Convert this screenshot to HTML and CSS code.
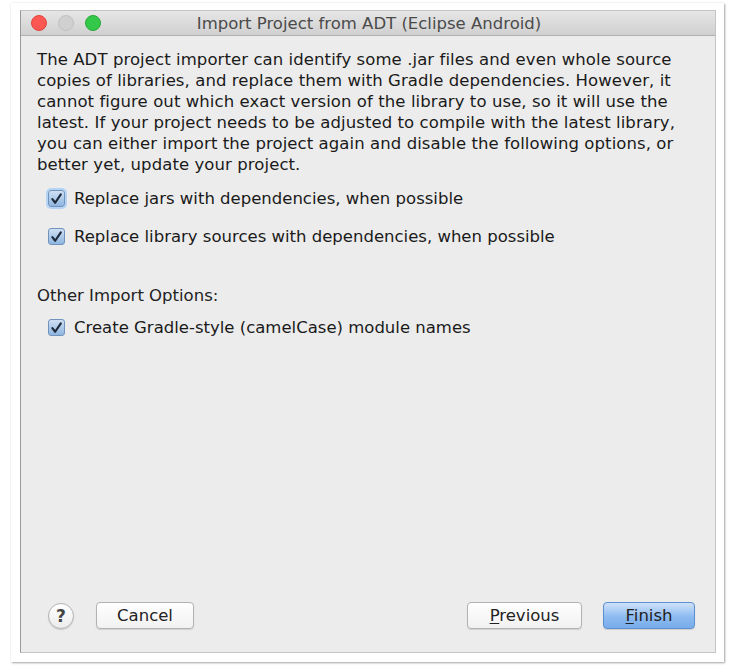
FILE: index.html
```html
<!DOCTYPE html>
<html>
<head>
<meta charset="utf-8">
<link rel="stylesheet" href="styles.css">
</head>
<body>
<div class="frame">
  <div class="window">
    <div class="titlebar">
      <div class="lights">
        <span class="light red"></span>
        <span class="light gray"></span>
        <span class="light green"></span>
      </div>
      <div class="title">Import Project from ADT (Eclipse Android)</div>
    </div>
    <div class="content">
      <p class="intro">The ADT project importer can identify some .jar files and even whole source<br>copies of libraries, and replace them with Gradle dependencies. However, it<br>cannot figure out which exact version of the library to use, so it will use the<br>latest. If your project needs to be adjusted to compile with the latest library,<br>you can either import the project again and disable the following options, or<br>better yet, update your project.</p>
      <div class="options">
        <label class="check focus"><span class="box"><svg viewBox="0 0 16 16" width="16" height="16"><path d="M3.6 8.2 L6.6 12 L12.6 3" fill="none" stroke="#1f2a3a" stroke-width="2.3" stroke-linecap="round" stroke-linejoin="round"/></svg></span>Replace jars with dependencies, when possible</label>
        <label class="check"><span class="box"><svg viewBox="0 0 16 16" width="16" height="16"><path d="M3.6 8.2 L6.6 12 L12.6 3" fill="none" stroke="#1f2a3a" stroke-width="2.3" stroke-linecap="round" stroke-linejoin="round"/></svg></span>Replace library sources with dependencies, when possible</label>
      </div>
      <div class="section">Other Import Options:</div>
      <label class="check"><span class="box"><svg viewBox="0 0 16 16" width="16" height="16"><path d="M3.6 8.2 L6.6 12 L12.6 3" fill="none" stroke="#1f2a3a" stroke-width="2.3" stroke-linecap="round" stroke-linejoin="round"/></svg></span>Create Gradle-style (camelCase) module names</label>
    </div>
    <div class="footer">
      <div class="left">
        <span class="help">?</span>
        <button class="btn cancel">Cancel</button>
      </div>
      <div class="right">
        <button class="btn prev"><u>P</u>revious</button>
        <button class="btn finish"><u>F</u>inish</button>
      </div>
    </div>
  </div>
</div>
</body>
</html>
```
FILE: styles.css
```css
* { box-sizing: border-box; }
html, body { margin: 0; padding: 0; background: #fff; }
body {
  width: 746px;
  height: 670px;
  font-family: "DejaVu Sans", "Noto Sans", sans-serif;
  color: #222;
}
.frame {
  margin: 3px 0 0 11px;
  width: 713px;
  height: 659px;
  background: #fff;
  padding: 7px 8px 9px 9px;
  box-shadow: 1px 1px 2px rgba(0,0,0,0.35), 0 0 1px rgba(0,0,0,0.15);
}
.window {
  width: 696px;
  height: 643px;
  background: #ececec;
  border: 1px solid #c4c4c4;
  border-left-color: #9a9a9a;
  display: flex;
  flex-direction: column;
}
.titlebar {
  height: 25px;
  background: linear-gradient(#e6e6e6, #d0d0d0);
  border-bottom: 1px solid #b0b0b0;
  position: relative;
  display: flex;
  align-items: center;
  justify-content: center;
}
.lights {
  position: absolute;
  left: 10px;
  top: 4px;
  display: flex;
  gap: 11px;
}
.light {
  width: 16px;
  height: 16px;
  border-radius: 50%;
  display: block;
}
.red { background: #fc5753; border: 1px solid #e0443e; }
.gray { background: #d0d0d0; border: 1px solid #c2c2c2; }
.green { background: #34c84a; border: 1px solid #27aa35; }
.title {
  font-size: 16.5px;
  color: #4a4a4a;
  padding-left: 2px;
}
.content {
  flex: 1;
  padding: 13px 0 0 16px;
  font-size: 16.5px;
}
.intro {
  margin: 0;
  line-height: 21px;
  color: #1a1a1a;
  white-space: nowrap;
  letter-spacing: 0.08px;
}
.options {
  margin-top: 13px;
  display: flex;
  flex-direction: column;
  gap: 17px;
}
.check {
  display: flex;
  align-items: center;
  height: 21px;
  padding-left: 11px;
  color: #1a1a1a;
}
.box {
  width: 17px;
  height: 17px;
  border-radius: 3px;
  background: linear-gradient(#cfe0f3, #8fb6e0);
  border: 1px solid #6f93bd;
  margin-right: 9px;
  display: flex;
  align-items: center;
  justify-content: center;
}
.check.focus .box {
  box-shadow: 0 0 0 2px #b4d3f5;
}
.section {
  margin-top: 38px;
  margin-bottom: 11px;
  height: 21px;
  line-height: 21px;
}
.footer {
  height: 75px;
  padding: 0 20px 23px 27px;
  display: flex;
  align-items: flex-end;
  justify-content: space-between;
}
.left, .right { display: flex; align-items: center; }
.help {
  width: 26px;
  height: 26px;
  border-radius: 50%;
  background: linear-gradient(#ffffff, #ececec);
  border: 1px solid #b3b3b3;
  box-shadow: 0 1px 1px rgba(0,0,0,0.15);
  display: flex;
  align-items: center;
  justify-content: center;
  font-size: 17px;
  font-weight: bold;
  color: #444;
  margin-right: 22px;
}
.btn {
  font-family: "DejaVu Sans", sans-serif;
  font-size: 16.5px;
  color: #222;
  height: 27px;
  border-radius: 4px;
  border: 1px solid #b2b2b2;
  background: linear-gradient(#ffffff, #f1f1f1);
  box-shadow: 0 1px 1px rgba(0,0,0,0.12);
  padding: 0;
}
.cancel { width: 98px; }
.prev { width: 115px; margin-right: 21px; }
.finish {
  width: 92px;
  border-color: #5c8fd0;
  background: linear-gradient(#cfe2f9, #8dbbf0 55%, #78acec);
}
u { text-underline-offset: 2px; }
```
